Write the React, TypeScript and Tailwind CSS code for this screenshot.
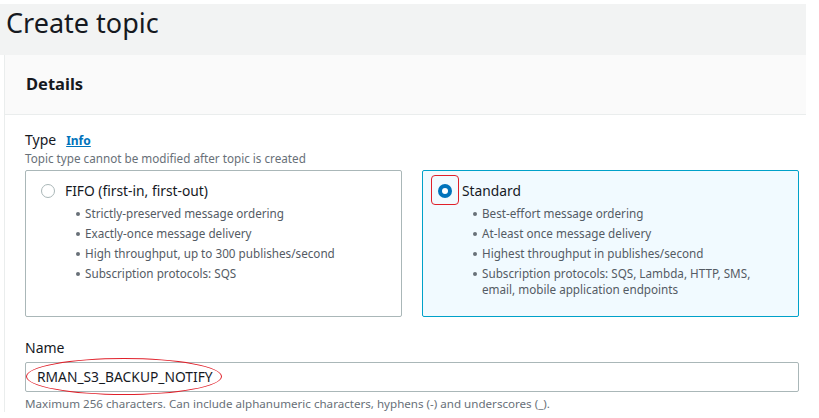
import React from 'react'

const fifoItems = [
  'Strictly-preserved message ordering',
  'Exactly-once message delivery',
  'High throughput, up to 300 publishes/second',
  'Subscription protocols: SQS',
]

const standardItems = [
  'Best-effort message ordering',
  'At-least once message delivery',
  'Highest throughput in publishes/second',
  'Subscription protocols: SQS, Lambda, HTTP, SMS, email, mobile application endpoints',
]

function Bullets({ items }: { items: string[] }) {
  return (
    <ul className="mt-[4px] pl-[50px] pr-4 space-y-1">
      {items.map((t) => (
        <li key={t} className="flex text-[11.7px] leading-4 text-[#545b64]">
          <span className="mt-[7px] h-[4px] w-[4px] shrink-0 rounded-full bg-[#687078]" />
          <span className="ml-[5px]">{t}</span>
        </li>
      ))}
    </ul>
  )
}

function TypeCard({
  label,
  items,
  selected,
}: {
  label: string
  items: string[]
  selected?: boolean
}) {
  return (
    <div
      className={
        selected
          ? 'h-[147px] rounded-[2px] border border-[#00a1c9] bg-[#f1faff] pt-[10px]'
          : 'h-[147px] rounded-[2px] border border-[#aab7b8] bg-white pt-[10px]'
      }
    >
      <div className="relative flex items-center pl-[15px]">
        {selected ? (
          <span className="flex h-[14px] w-[14px] items-center justify-center rounded-full bg-[#0073bb]">
            <span className="h-[6px] w-[6px] rounded-full bg-white" />
          </span>
        ) : (
          <span className="h-[14px] w-[14px] rounded-full border border-[#aab7b8] bg-white" />
        )}
        <span className="ml-[10px] text-[13.8px] leading-5 text-[#16191f]">{label}</span>
        {selected && (
          <span className="absolute left-[8px] top-[-6px] h-[30px] w-[28px] rounded-[4px] border border-[#e0202a]" />
        )}
      </div>
      <Bullets items={items} />
    </div>
  )
}

export default function App() {
  return (
    <div className="relative h-[418px] w-[819px] overflow-hidden bg-white font-['Noto_Sans',sans-serif] text-[#16191f]">
      <div className="mt-1 h-[51px] w-[806px] bg-[#f2f3f3] pl-[6px] pt-[3px]">
        <h1 className="text-[27px] leading-8 text-[#16191f]">Create topic</h1>
      </div>

      <div className="ml-1 w-[802px] border-l border-[#eaeded]">
        <div className="flex h-[60px] items-center border-b border-[#eaeded] bg-[#fafafa] pl-[21px]">
          <h2 className="text-[16.5px] font-bold text-[#16191f]">Details</h2>
        </div>

        <div className="pl-[20px] pr-[7px] pt-[15px]">
          <div className="flex items-baseline gap-[10px]">
            <span className="text-[14px] leading-5">Type</span>
            <span className="text-[12px] font-bold text-[#0073bb] underline">Info</span>
          </div>
          <div className="text-[11.7px] leading-4 text-[#687078]">
            Topic type cannot be modified after topic is created
          </div>

          <div className="mt-[4px] grid grid-cols-2 gap-[20px]">
            <TypeCard label="FIFO (first-in, first-out)" items={fifoItems} />
            <TypeCard label="Standard" items={standardItems} selected />
          </div>

          <div className="mt-[21px] text-[14px] leading-5">Name</div>
          <div className="relative mt-[4px]">
            <div className="flex h-[30px] items-center rounded-[2px] border border-[#aab7b8] bg-white pl-[11px] text-[13.8px]">
              RMAN_S3_BACKUP_NOTIFY
            </div>
            <span className="absolute left-[1px] top-[-4px] h-[37px] w-[196px] rounded-[50%] border border-[#e0202a]" />
          </div>
          <div className="mt-[4px] text-[11.6px] leading-4 text-[#687078]">
            Maximum 256 characters. Can include alphanumeric characters, hyphens (-) and underscores (_).
          </div>
        </div>
      </div>
    </div>
  )
}
